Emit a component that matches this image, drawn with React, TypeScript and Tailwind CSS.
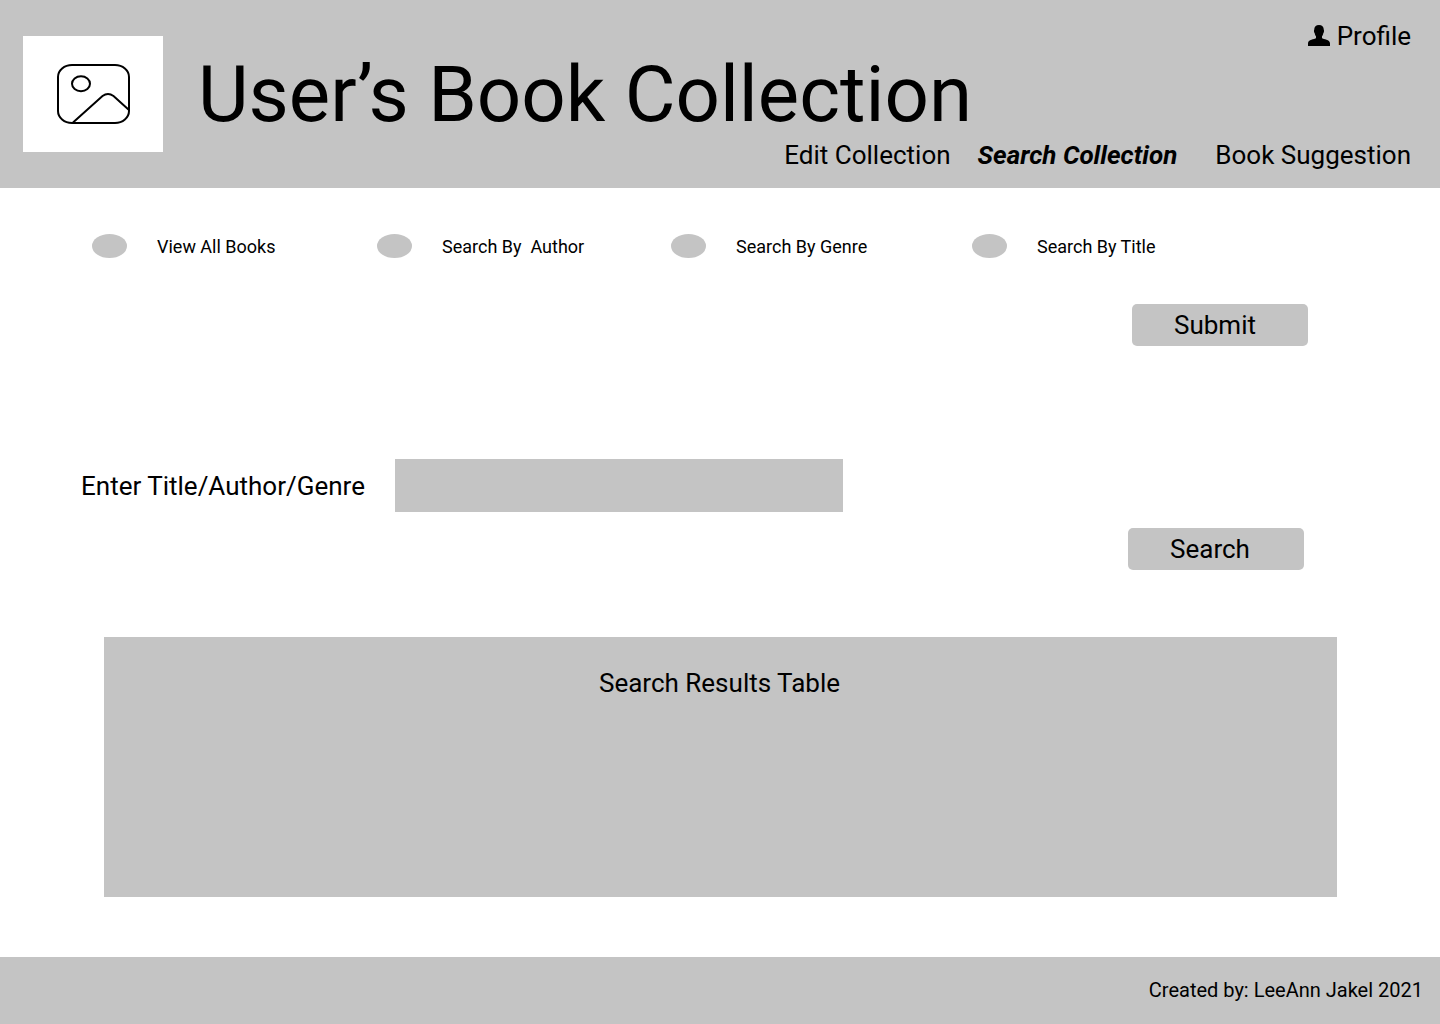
import React from "react";

const modes = [
  { id: "all", label: "View All Books", cell: "w-[285px]" },
  { id: "author", label: "Search By  Author", cell: "w-[294px]" },
  { id: "genre", label: "Search By Genre", cell: "w-[301px]" },
  { id: "title", label: "Search By Title", cell: "" },
];

function ImageIcon() {
  return (
    <svg viewBox="0 0 74 60" className="h-[60px] w-[74px]" fill="none" stroke="#000" strokeWidth="2" aria-hidden="true">
      <rect x="2" y="1" width="71" height="58" rx="14" ry="12" />
      <ellipse cx="25" cy="19.700" rx="9" ry="7.500" />
      <path d="M17 58.500L46.500 32Q52 28 57.500 32L73 46" />
    </svg>
  );
}

function PersonIcon() {
  return (
    <svg viewBox="0 0 22 21" className="-mt-0.5 h-[21px] w-[22px]" fill="#000" aria-hidden="true">
      <path d="M11 0C8 0 6.200 1.500 6.200 4.800C5.700 5.500 6 7.500 6.700 8.200C7 9.800 7.500 10.700 8 11.200V13.300C6.500 14.200 0 14.500 0 18.500V21H22V18.500C22 14.500 15.500 14.200 14 13.300V11.200C14.500 10.700 15 9.800 15.300 8.200C16 7.500 16.300 5.500 15.800 4.800C15.800 1.500 14 0 11 0Z" />
    </svg>
  );
}

export default function App() {
  return (
    <div className="flex min-h-screen flex-col bg-white font-['Roboto',sans-serif] text-[26px] leading-8 text-black">
      <header className="flex gap-[35px] bg-[#c4c4c4] pl-[23px] pr-[29px]">
        <div className="mt-9 flex h-[116px] w-[140px] shrink-0 items-center justify-center bg-white">
          <ImageIcon />
        </div>
        <div className="flex flex-1 flex-col pb-4 pt-5">
          <a href="#profile" className="flex items-center gap-[7px] self-end">
            <PersonIcon />
            Profile
          </a>
          <h1 className="whitespace-nowrap text-[78px] leading-[86px]">User’s Book Collection</h1>
          <nav className="flex self-end whitespace-nowrap leading-[34px]">
            <a href="#edit">Edit Collection</a>
            <a href="#search" className="ml-[27px] font-bold italic">Search Collection</a>
            <a href="#suggestion" className="ml-[38px]">Book Suggestion</a>
          </nav>
        </div>
      </header>

      <main className="flex-1">
        <form>
          <div className="flex pl-[92px] pt-[46px] text-lg leading-6">
            {modes.map((m) => (
              <label key={m.id} className={`flex h-6 items-center gap-[30px] whitespace-pre ${m.cell}`}>
                <input type="radio" name="mode" value={m.id} className="h-6 w-[35px] appearance-none rounded-[50%] bg-[#c4c4c4] checked:bg-[#8c8c8c]" />
                <span className="pt-0.5">{m.label}</span>
              </label>
            ))}
          </div>
          <div className="mt-[46px] flex justify-end pr-[132px]">
            <button type="submit" className="h-[42px] w-44 rounded-[5px] bg-[#c4c4c4] pr-[10px]">Submit</button>
          </div>
        </form>
        <form>
          <div className="mt-[113px] flex items-center gap-[30px] pl-[81px]">
            <label htmlFor="query">Enter Title/Author/Genre</label>
            <input id="query" type="text" className="h-[53px] w-[448px] bg-[#c4c4c4] px-3" />
          </div>
          <div className="mt-4 flex justify-end pr-[136px]">
            <button type="submit" className="h-[42px] w-44 rounded-[5px] bg-[#c4c4c4] pr-3">Search</button>
          </div>
        </form>
        <section className="mb-[60px] ml-[104px] mr-[103px] mt-[67px] h-[260px] bg-[#c4c4c4] pr-0.5 pt-[30px] text-center">
          <h2>Search Results Table</h2>
        </section>
      </main>

      <footer className="flex h-[67px] justify-end bg-[#c4c4c4] pr-[17px] pt-[17px] text-xl leading-8">
        Created by: LeeAnn Jakel 2021
      </footer>
    </div>
  );
}
